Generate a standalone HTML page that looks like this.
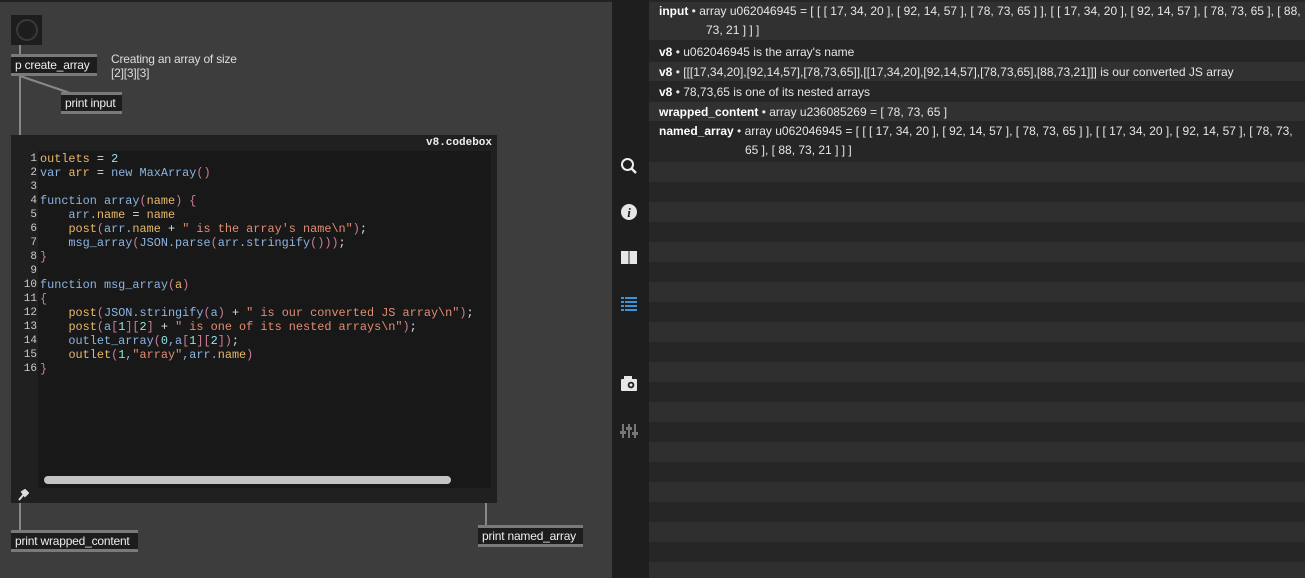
<!DOCTYPE html>
<html><head><meta charset="utf-8"><style>
*{margin:0;padding:0;box-sizing:border-box}
body{width:1305px;height:578px;background:#3d3d3d;position:relative;overflow:hidden;font-family:"Liberation Sans",sans-serif}
.abs{position:absolute}
.obj{position:absolute;background:#1d1d1d;border-top:3px solid #7a7a7a;border-bottom:3px solid #7a7a7a;color:#eee;font-size:12px;line-height:16px;padding:0 4px;white-space:nowrap;letter-spacing:-0.2px}
.code{font-family:"Liberation Mono",monospace;font-size:11.85px;line-height:14px;white-space:pre;color:#8db4e2}
.ln{font-family:"Liberation Mono",monospace;font-size:11px;line-height:14px;color:#ccc;text-align:right;white-space:pre}
.o{color:#e8b96a}.s{color:#e38d73}.n{color:#8fe3e3}.p{color:#cf7d9a}.w{color:#ddd}
.row{position:absolute;left:649px;width:656px;font-size:12px;line-height:20px;color:#e6e6e6;padding-left:10px;letter-spacing:0}
.row b{color:#fff}
.L{background:#313131}.D{background:#262626}
</style></head><body>
<div class="abs" style="left:0;top:0;width:1305px;height:2px;background:#222"></div>
<div class="abs" style="left:19px;top:45px;width:2px;height:12px;background:#888"></div>
<div class="abs" style="left:19px;top:75px;width:2px;height:62px;background:#888"></div>
<svg class="abs" style="left:0;top:0" width="120" height="100"><line x1="20" y1="76" x2="70" y2="93" stroke="#888" stroke-width="2"/></svg>
<div class="abs" style="left:11px;top:15px;width:31px;height:30px;background:#1d1d1d"></div>
<div class="abs" style="left:16px;top:19px;width:22px;height:22px;border:2px solid #3a3a3a;border-radius:50%"></div>
<div class="obj" style="left:11px;top:54px;width:86px">p create_array</div>
<div class="abs" style="left:111px;top:52px;color:#ddd;font-size:12px;line-height:14px;letter-spacing:-0.2px">Creating an array of size<br>[2][3][3]</div>
<div class="obj" style="left:61px;top:92px;width:61px">print input</div>
<div class="abs" style="left:11px;top:135px;width:486px;height:368px;background:#202020"></div>
<div class="abs" style="left:38px;top:151px;width:453px;height:337px;background:#181818"></div>
<div class="abs" style="left:426px;top:137px;color:#eee;font-family:'Liberation Mono',monospace;font-size:11px;font-weight:bold">v8.codebox</div>
<div class="ln abs" style="left:12px;top:152px;width:25px">1
2
3
4
5
6
7
8
9
10
11
12
13
14
15
16</div>
<div class="code abs" style="left:40px;top:152px"><span class="o">outlets</span> <span class="w">=</span> <span class="n">2</span>
var <span class="o">arr</span> <span class="w">=</span> new MaxArray<span class="p">()</span>

function array<span class="p">(</span><span class="o">name</span><span class="p">)</span> <span class="p">{</span>
    arr.<span class="o">name</span> <span class="w">=</span> <span class="o">name</span>
    <span class="o">post</span><span class="p">(</span>arr.<span class="o">name</span> <span class="w">+</span> <span class="s">" is the array's name\n"</span><span class="p">)</span><span class="w">;</span>
    msg_array<span class="p">(</span>JSON.parse<span class="p">(</span>arr.stringify<span class="p">()))</span><span class="w">;</span>
<span class="p">}</span>

function msg_array<span class="p">(</span><span class="o">a</span><span class="p">)</span>
<span class="p">{</span>
    <span class="o">post</span><span class="p">(</span>JSON.stringify<span class="p">(</span>a<span class="p">)</span> <span class="w">+</span> <span class="s">" is our converted JS array\n"</span><span class="p">)</span><span class="w">;</span>
    <span class="o">post</span><span class="p">(</span>a<span class="p">[</span><span class="n">1</span><span class="p">][</span><span class="n">2</span><span class="p">]</span> <span class="w">+</span> <span class="s">" is one of its nested arrays\n"</span><span class="p">)</span><span class="w">;</span>
    outlet_array<span class="p">(</span><span class="n">0</span>,a<span class="p">[</span><span class="n">1</span><span class="p">][</span><span class="n">2</span><span class="p">])</span><span class="w">;</span>
    <span class="o">outlet</span><span class="p">(</span><span class="n">1</span>,<span class="s">"array"</span>,arr.<span class="o">name</span><span class="p">)</span>
<span class="p">}</span></div>
<div class="abs" style="left:44px;top:476px;width:407px;height:8px;background:#c4c4c4;border-radius:4px"></div>
<svg class="abs" style="left:17px;top:489px" width="12" height="12"><path d="M2 11 L7 5 M5 3 L8 1 L11 4 L8 7 Z" stroke="#ddd" stroke-width="2" fill="#ddd"/></svg>
<div class="abs" style="left:19px;top:503px;width:2px;height:27px;background:#888"></div>
<div class="abs" style="left:485px;top:503px;width:2px;height:22px;background:#888"></div>
<div class="obj" style="left:11px;top:530px;width:127px">print wrapped_content</div>
<div class="obj" style="left:478px;top:525px;width:105px">print named_array</div>
<div class="abs" style="left:612px;top:0;width:37px;height:578px;background:#1e1e1e"></div>
<svg class="abs" style="left:620px;top:157px" width="20" height="20"><circle cx="7.5" cy="7.5" r="5.5" stroke="#eee" stroke-width="2" fill="none"/><line x1="11.5" y1="11.5" x2="16" y2="16" stroke="#eee" stroke-width="2.4"/></svg>
<svg class="abs" style="left:620px;top:203px" width="18" height="18"><circle cx="9" cy="9" r="8" fill="#e6e6e6"/><text x="9" y="14" font-family="Liberation Serif" font-style="italic" font-weight="bold" font-size="13" fill="#1e1e1e" text-anchor="middle">i</text></svg>
<div class="abs" style="left:621px;top:251px;width:16px;height:13px;background:#e6e6e6"></div>
<div class="abs" style="left:628px;top:251px;width:2px;height:13px;background:#888"></div>
<svg class="abs" style="left:621px;top:296px" width="16" height="16"><g fill="#3b94d9"><rect x="0" y="1" width="3" height="2"/><rect x="4" y="1" width="12" height="2"/><rect x="0" y="5" width="3" height="2"/><rect x="4" y="5" width="12" height="2"/><rect x="0" y="9" width="3" height="2"/><rect x="4" y="9" width="12" height="2"/><rect x="0" y="13" width="3" height="2"/><rect x="4" y="13" width="12" height="2"/></g></svg>
<svg class="abs" style="left:620px;top:375px" width="18" height="18"><rect x="1" y="4" width="16" height="12" rx="1" fill="#e6e6e6"/><rect x="4" y="1" width="8" height="4" fill="#e6e6e6"/><circle cx="11" cy="10" r="3.3" fill="#1e1e1e"/><circle cx="11" cy="10" r="1.5" fill="#e6e6e6"/></svg>
<svg class="abs" style="left:620px;top:422px" width="18" height="18"><g stroke="#777" stroke-width="2"><line x1="3" y1="2" x2="3" y2="16"/><line x1="9" y1="2" x2="9" y2="16"/><line x1="15" y1="2" x2="15" y2="16"/></g><g fill="#777"><rect x="0" y="9" width="6" height="3"/><rect x="6" y="5" width="6" height="3"/><rect x="12" y="10" width="6" height="3"/></g></svg>
<div class="abs" style="left:649px;top:0;width:656px;height:578px;background:#262626"></div>
<div class="row L" style="top:2px;height:38px"><div style="padding-left:47px;text-indent:-47px;line-height:19px"><b>input</b> • array u062046945 = [ [ [ 17, 34, 20 ], [ 92, 14, 57 ], [ 78, 73, 65 ] ], [ [ 17, 34, 20 ], [ 92, 14, 57 ], [ 78, 73, 65 ], [ 88, 73, 21 ] ] ]</div></div>
<div class="row D" style="top:42px;height:19px"><b>v8</b> • u062046945 is the array's name</div>
<div class="row L" style="top:62px;height:19px"><b>v8</b> • [[[17,34,20],[92,14,57],[78,73,65]],[[17,34,20],[92,14,57],[78,73,65],[88,73,21]]] is our converted JS array</div>
<div class="row D" style="top:82px;height:19px"><b>v8</b> • 78,73,65 is one of its nested arrays</div>
<div class="row L" style="top:102px;height:19px"><b>wrapped_content</b> • array u236085269 = [ 78, 73, 65 ]</div>
<div class="row D" style="top:122px;height:38px"><div style="padding-left:86px;text-indent:-86px;line-height:19px"><b>named_array</b> • array u062046945 = [ [ [ 17, 34, 20 ], [ 92, 14, 57 ], [ 78, 73, 65 ] ], [ [ 17, 34, 20 ], [ 92, 14, 57 ], [ 78, 73, 65 ], [ 88, 73, 21 ] ] ]</div></div>
<div class="abs" style="left:649px;top:162px;width:656px;height:416px;background:repeating-linear-gradient(#2f2f2f 0 20px,#262626 20px 40px)"></div>
</body></html>
